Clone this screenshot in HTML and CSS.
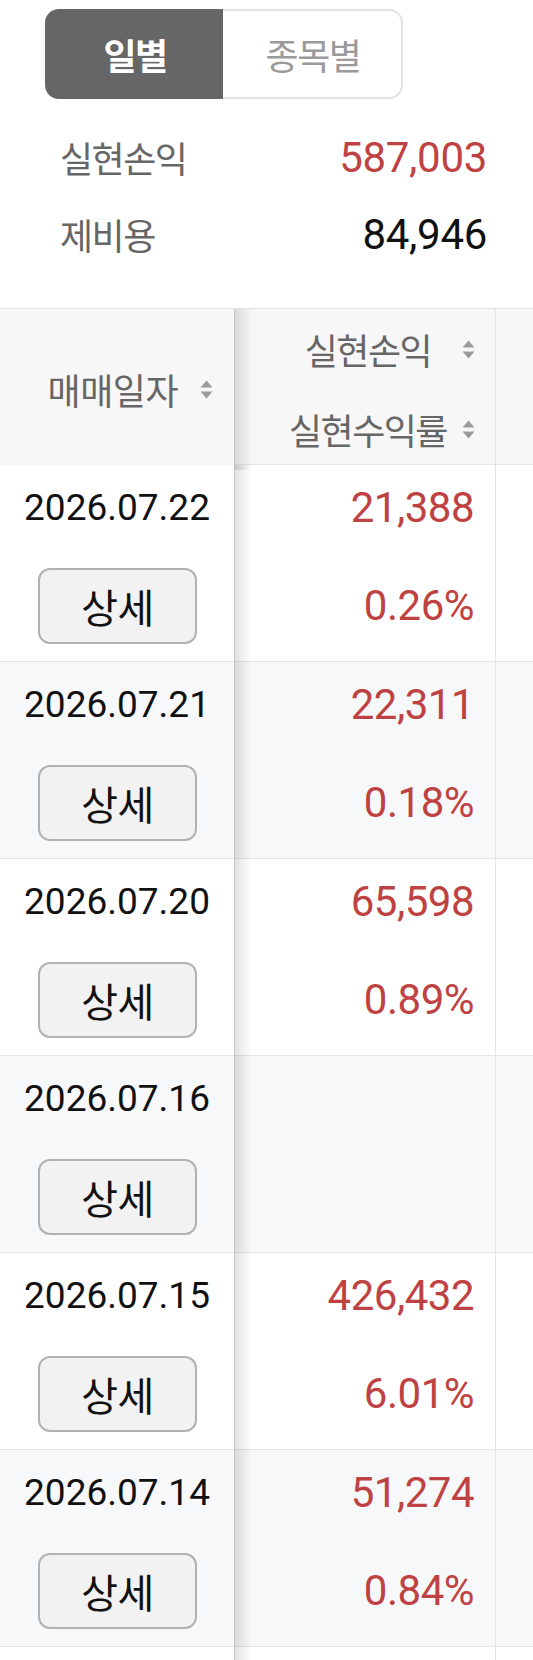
FILE: index.html
```html
<!DOCTYPE html>
<html lang="ko">
<head>
<meta charset="utf-8">
<title>실현손익</title>
<link rel="stylesheet" href="styles.css">
</head>
<body>
<div class="page">
  <div class="tabs">
    <div class="tab active">일별</div>
    <div class="tab inactive">종목별</div>
  </div>

  <div class="summary">
    <div class="sum-row"><span class="label">실현손익</span><span class="val red">587,003</span></div>
    <div class="sum-row"><span class="label">제비용</span><span class="val">84,946</span></div>
  </div>

  <div class="table-wrap">
    <div class="trow thead">
      <div class="cell c1 th1">
        <span class="th-text">매매일자</span>
        <svg class="sort" viewBox="0 0 13 19" width="13" height="19"><path d="M6.5 0.5 L12.5 7.5 L0.5 7.5 Z"/><path d="M0.5 11.5 L12.5 11.5 L6.5 18.5 Z"/></svg>
      </div>
      <div class="cell c2 th2">
        <div class="th-grid">
          <span class="th-text">실현손익</span>
          <svg class="sort" viewBox="0 0 13 19" width="13" height="19"><path d="M6.5 0.5 L12.5 7.5 L0.5 7.5 Z"/><path d="M0.5 11.5 L12.5 11.5 L6.5 18.5 Z"/></svg>
          <span class="th-text">실현수익률</span>
          <svg class="sort" viewBox="0 0 13 19" width="13" height="19"><path d="M6.5 0.5 L12.5 7.5 L0.5 7.5 Z"/><path d="M0.5 11.5 L12.5 11.5 L6.5 18.5 Z"/></svg>
        </div>
      </div>
      <div class="cell c3"></div>
    </div>

    <div class="trow data">
      <div class="cell c1 bc"><span class="date">2026.07.22</span><button class="btn">상세</button></div>
      <div class="cell c2 bc"><span class="amt red">21,388</span><span class="pct red">0.26%</span></div>
      <div class="cell c3 bc"></div>
    </div>
    <div class="trow data alt">
      <div class="cell c1 bc"><span class="date">2026.07.21</span><button class="btn">상세</button></div>
      <div class="cell c2 bc"><span class="amt red">22,311</span><span class="pct red">0.18%</span></div>
      <div class="cell c3 bc"></div>
    </div>
    <div class="trow data">
      <div class="cell c1 bc"><span class="date">2026.07.20</span><button class="btn">상세</button></div>
      <div class="cell c2 bc"><span class="amt red">65,598</span><span class="pct red">0.89%</span></div>
      <div class="cell c3 bc"></div>
    </div>
    <div class="trow data alt">
      <div class="cell c1 bc"><span class="date">2026.07.16</span><button class="btn">상세</button></div>
      <div class="cell c2 bc"></div>
      <div class="cell c3 bc"></div>
    </div>
    <div class="trow data">
      <div class="cell c1 bc"><span class="date">2026.07.15</span><button class="btn">상세</button></div>
      <div class="cell c2 bc"><span class="amt red">426,432</span><span class="pct red">6.01%</span></div>
      <div class="cell c3 bc"></div>
    </div>
    <div class="trow data alt">
      <div class="cell c1 bc"><span class="date">2026.07.14</span><button class="btn">상세</button></div>
      <div class="cell c2 bc"><span class="amt red">51,274</span><span class="pct red">0.84%</span></div>
      <div class="cell c3 bc"></div>
    </div>
    <div class="trow data tail">
      <div class="cell c1 bc"></div>
      <div class="cell c2 bc"></div>
      <div class="cell c3 bc"></div>
    </div>
  </div>
</div>
</body>
</html>
```

FILE: styles.css
```css
* { box-sizing: border-box; }

html, body {
  margin: 0;
  padding: 0;
  background: #fff;
}

body {
  font-family: Roboto, "Noto Sans CJK KR", sans-serif;
  color: #111;
}

.page {
  width: 533px;
  overflow: hidden;
}

/* ---------- tabs ---------- */
.tabs {
  display: flex;
  margin: 9px 0 0 45px;
  height: 90px;
}

.tab {
  display: flex;
  align-items: center;
  justify-content: center;
  font-family: "Noto Sans CJK KR", sans-serif;
  font-size: 36px;
  letter-spacing: -1.5px;
  padding-left: 2px;
}

.tab.active {
  width: 178px;
  background: #666666;
  color: #fff;
  font-weight: 700;
  border-radius: 14px 0 0 14px;
}

.tab.inactive {
  width: 180px;
  color: #9a9a9a;
  border: 2px solid #e3e3e3;
  border-left: none;
  border-radius: 0 14px 14px 0;
}

/* ---------- summary ---------- */
.summary {
  margin-top: 20px;
  padding: 0 46px 0 60px;
}

.sum-row {
  display: flex;
  justify-content: space-between;
  align-items: center;
  height: 77px;
  line-height: 77px;
}

.label {
  font-family: "Noto Sans CJK KR", sans-serif;
  font-size: 36px;
  letter-spacing: -1.5px;
  color: #666;
}

.val {
  font-family: Roboto, sans-serif;
  font-size: 42px;
  letter-spacing: -0.3px;
  color: #111;
}

.red,
.val.red { color: #bf4242; }

/* ---------- table ---------- */
.table-wrap {
  margin-top: 35px;
  overflow: hidden;
  border-top: 1px solid #e2e2e2;
}

.trow {
  display: grid;
  grid-template-columns: 235px 261px 300px;
  width: 796px;
  border-bottom: 1px solid #e5e5e5;
  background: #fff;
}

.trow.alt { background: #f7f8fa; }

.thead {
  height: 156px;
  background: #f7f7f7;
}

.cell {
  border-right: 1px solid #e3e3e3;
  min-width: 0;
}

.c1 {
  position: sticky;
  left: 0;
  z-index: 2;
  background: inherit;
}

.c1::after {
  content: "";
  position: absolute;
  top: 0;
  bottom: -1px;
  left: 100%;
  width: 18px;
  background: linear-gradient(to right, rgba(0, 0, 0, 0.12), rgba(0, 0, 0, 0));
  pointer-events: none;
}

.c3 { border-right: none; overflow: hidden; }

/* header cells */
.th-text {
  font-family: "Noto Sans CJK KR", sans-serif;
  font-size: 36px;
  letter-spacing: -1.5px;
  color: #666;
  white-space: nowrap;
}

.th1 .th-text { letter-spacing: -0.5px; }

.sort { fill: #9c9c9c; display: block; }

.th1 {
  display: flex;
  justify-content: flex-end;
  align-items: center;
  gap: 22px;
  padding-right: 21px;
}

.th2 {
  display: flex;
  justify-content: flex-end;
  align-items: center;
  padding-right: 20px;
}

.th-grid {
  display: grid;
  grid-template-columns: auto 13px;
  grid-auto-rows: 80px;
  column-gap: 15px;
  align-items: center;
  justify-items: center;
}

/* body cells */
.data { height: 197px; }

.bc {
  display: flex;
  flex-direction: column;
  padding: 18px 21px 16px;
}

.c1.bc { align-items: center; }
.c2.bc { align-items: flex-end; }

.date {
  font-size: 37px;
  line-height: 50px;
  color: #111;
}

.btn {
  margin-top: 35px;
  width: 159px;
  height: 76px;
  padding: 0 0 0 1px;
  border: 2px solid #b2b2b2;
  border-radius: 12px;
  background: #f2f2f2;
  font-family: "Noto Sans CJK KR", sans-serif;
  font-size: 40px;
  letter-spacing: -0.5px;
  color: #111;
  display: flex;
  align-items: center;
  justify-content: center;
}

.amt {
  font-size: 42px;
  line-height: 50px;
  letter-spacing: -0.5px;
  white-space: nowrap;
}

.pct {
  margin-top: 35px;
  font-size: 42px;
  line-height: 76px;
  letter-spacing: -0.5px;
}
```
